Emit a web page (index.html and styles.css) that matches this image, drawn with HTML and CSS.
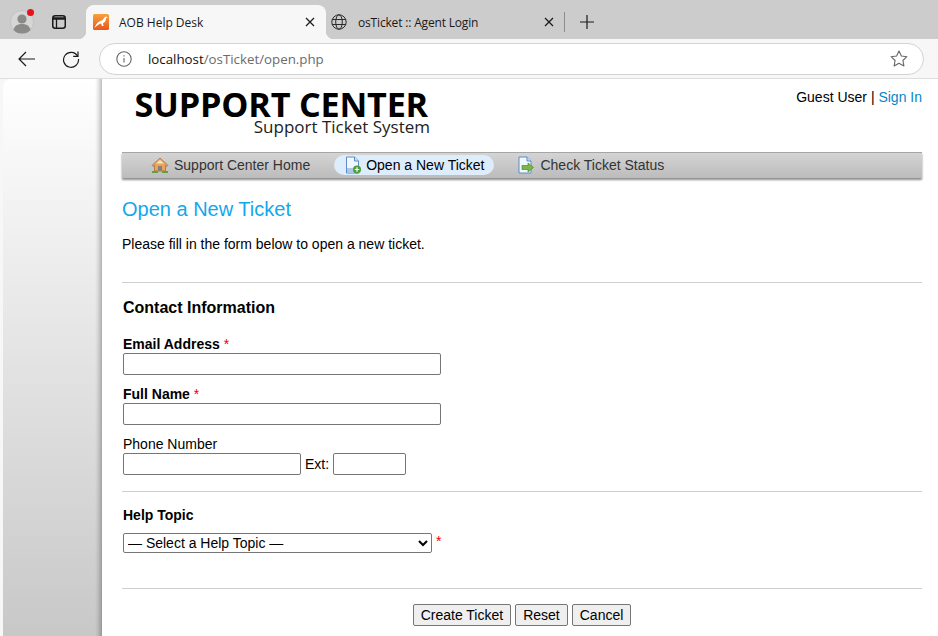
FILE: index.html
```html
<!DOCTYPE html>
<html lang="en">
<head>
    <meta charset="UTF-8">
    <title>AOB Help Desk</title>
    <link rel="stylesheet" href="styles.css">
</head>
<body>
    <div class="tabstrip">
        <div class="profile">
            <svg width="24" height="24" viewBox="0 0 24 24">
                <circle cx="12" cy="12" r="11.5" fill="#d6d6d6" stroke="#c2c2c2"/>
                <circle cx="12" cy="9" r="4.6" fill="#8a8a88"/>
                <path d="M3.5 20c1-4.500 4.500-6 8.500-6s7.500 1.500 8.500 6c-2 2.500-5 3.500-8.500 3.500S5.500 22.500 3.500 20z" fill="#8a8a88"/>
            </svg>
            <span class="profile-dot"></span>
        </div>
        <svg class="tabs-btn" width="14" height="14" viewBox="0 0 14 14">
            <rect x="0.75" y="0.75" width="12.500" height="12.500" rx="2.500" fill="none" stroke="#1a1a1a" stroke-width="1.500"/>
            <path d="M1 3.500h12" stroke="#1a1a1a" stroke-width="2.500"/>
            <path d="M4.500 3.500v9.500" stroke="#1a1a1a" stroke-width="1.300"/>
        </svg>
        <div class="tab tab-active">
            <svg class="favicon" width="16" height="16" viewBox="0 0 16 16">
                <defs>
                    <linearGradient id="fav" x1="0" y1="0" x2="0" y2="1">
                        <stop offset="0" stop-color="#f8a13c"/>
                        <stop offset="1" stop-color="#e8571c"/>
                    </linearGradient>
                </defs>
                <rect width="16" height="16" rx="1.500" fill="url(#fav)"/>
                <path d="M1.500 14c.8-2.500 2-4.500 4-6 1.500-1.200 3.500-1.200 4.500-2.500.8-1 1.500-2.500 3-3l1.500.8-1.500 1.200c0 2.200-1.200 4-3 4.800l.5 2.700H9L8 9.500C6 9.800 4 11.500 1.500 14z" fill="#fff"/>
            </svg>
            <span class="tab-title">AOB Help Desk</span>
            <svg class="tab-close" width="10" height="10" viewBox="0 0 10 10"><path d="M1 1l8 8M9 1l-8 8" stroke="#1a1a1a" stroke-width="1.200"/></svg>
        </div>
        <div class="tab">
            <svg class="favicon" width="16" height="16" viewBox="0 0 16 16" fill="none" stroke="#2b2b2b" stroke-width="1">
                <circle cx="8" cy="8" r="7.200"/>
                <ellipse cx="8" cy="8" rx="3.300" ry="7.200"/>
                <path d="M1.200 5.500h13.600M1.200 10.500h13.600"/>
            </svg>
            <span class="tab-title">osTicket :: Agent Login</span>
            <svg class="tab-close" width="10" height="10" viewBox="0 0 10 10"><path d="M1 1l8 8M9 1l-8 8" stroke="#1a1a1a" stroke-width="1.200"/></svg>
        </div>
        <span class="tab-sep"></span>
        <svg class="new-tab" width="14" height="14" viewBox="0 0 14 14"><path d="M7 0v14M0 7h14" stroke="#1a1a1a" stroke-width="1.200"/></svg>
    </div>

    <div class="toolbar">
        <svg class="nav-icon" width="18" height="16" viewBox="0 0 18 16" fill="none" stroke="#1a1a1a" stroke-width="1.200"><path d="M17 8H1M8 1L1 8l7 7"/></svg>
        <svg class="nav-icon reload" width="18" height="18" viewBox="0 0 18 18" fill="none" stroke="#1a1a1a" stroke-width="1.200"><path d="M15.500 6A7.500 7.500 0 1 0 16.500 9"/><path d="M16 1.500V6.300H11.200"/></svg>
        <div class="address">
            <svg width="16" height="16" viewBox="0 0 16 16" fill="none" stroke="#666" stroke-width="1.100">
                <circle cx="8" cy="8" r="7.200"/>
                <path d="M8 7v4.500M8 4.300v1.300"/>
            </svg>
            <span class="url"><b>localhost</b>/osTicket/open.php</span>
            <svg class="star" width="18" height="17" viewBox="0 0 18 17" fill="none" stroke="#666" stroke-width="1.100" stroke-linejoin="round"><path d="M9 1l2.400 5 5.500.7-4 3.800 1 5.400L9 13.300 4.100 15.900l1-5.400-4-3.800L6.600 6z"/></svg>
        </div>
    </div>

    <div class="viewport">
        <div class="side-panel"></div>
        <div class="page">
            <div class="page-header">
                <div class="logo">
                    <div class="logo-main">SUPPORT CENTER</div>
                    <div class="logo-sub">Support Ticket System</div>
                </div>
                <div class="user-links">Guest User | <a href="#">Sign In</a></div>
            </div>

            <nav class="main-nav">
                <a href="#" class="nav-item nav-home">
                    <svg width="18" height="16" viewBox="0 0 18 16">
                        <path d="M9 1L1 8.500l1 1L3.500 8.300V14h11V8.300L16 9.500l1-1z" fill="#e8a45c" stroke="#a9743a" stroke-width="0.800"/>
                        <rect x="7" y="9" width="4" height="5" fill="#8a8078"/>
                        <path d="M5 6.500L9 3l4 3.500z" fill="#f6e4c8"/>
                        <path d="M1 15h6M11 15h6" stroke="#5ba33a" stroke-width="2"/>
                    </svg>
                    Support Center Home
                </a>
                <a href="#" class="nav-item nav-active">
                    <svg width="18" height="18" viewBox="0 0 18 18">
                        <path d="M2.500 1h8l4 4v12h-12z" fill="#f2f7fd" stroke="#5b8cc6"/>
                        <path d="M10.500 1v4h4" fill="#cfe0f3" stroke="#5b8cc6"/>
                        <path d="M3 12h11v4.500H3z" fill="#a9c8ea"/>
                        <circle cx="13" cy="13.500" r="4" fill="#4f9e3c"/>
                        <path d="M13 11.300v4.400M10.800 13.500h4.400" stroke="#fff" stroke-width="1.200"/>
                    </svg>
                    Open a New Ticket
                </a>
                <a href="#" class="nav-item nav-status">
                    <svg width="18" height="18" viewBox="0 0 18 18">
                        <path d="M2 1h8l4 4v12H2z" fill="#f2f7fd" stroke="#5b8cc6"/>
                        <path d="M10 1v4h4" fill="#cfe0f3" stroke="#5b8cc6"/>
                        <path d="M5 9.500h6V7l5.500 4.500L11 16v-2.500H5z" fill="#7ab648" stroke="#4f8a2c" stroke-width="0.700"/>
                    </svg>
                    Check Ticket Status
                </a>
            </nav>

            <h1 class="page-title">Open a New Ticket</h1>
            <p class="intro">Please fill in the form below to open a new ticket.</p>
            <hr class="rule">

            <form class="ticket-form">
                <h2 class="section-title">Contact Information</h2>

                <div class="field">
                    <label class="label-req">Email Address <span class="req">*</span></label>
                    <input type="text" class="input-wide">
                </div>
                <div class="field">
                    <label class="label-req">Full Name <span class="req">*</span></label>
                    <input type="text" class="input-wide">
                </div>
                <div class="field">
                    <label>Phone Number</label>
                    <div class="phone-row">
                        <input type="text" class="input-phone">
                        <span>Ext:</span>
                        <input type="text" class="input-ext">
                    </div>
                </div>

                <hr class="rule rule-mid">

                <div class="topic">
                    <label class="label-req">Help Topic</label>
                    <div class="topic-row">
                        <select class="topic-select">
                            <option>— Select a Help Topic —</option>
                        </select>
                        <span class="req">*</span>
                    </div>
                </div>

                <hr class="rule rule-end">

                <div class="buttons">
                    <button type="button">Create Ticket</button>
                    <button type="button">Reset</button>
                    <button type="button">Cancel</button>
                </div>
            </form>
        </div>
    </div>
</body>
</html>
```

FILE: styles.css
```css
* {
    box-sizing: border-box;
}

html, body {
    height: 100%;
}

body {
    margin: 0;
    overflow: hidden;
    font-family: "Liberation Sans", Arial, sans-serif;
    font-size: 14px;
    color: #000;
    background: #fff;
}

/* browser chrome */
.tabstrip {
    height: 39px;
    background: #cccccc;
    display: flex;
    align-items: flex-end;
    position: relative;
}

.profile {
    width: 24px;
    height: 24px;
    margin: 0 0 5px 10px;
    position: relative;
}

.profile svg {
    display: block;
}

.profile-dot {
    position: absolute;
    top: -1px;
    right: 0;
    width: 7px;
    height: 7px;
    border-radius: 50%;
    background: #e8101c;
}

.tabs-btn {
    margin: 0 0 10px 18px;
}

.tab {
    height: 34px;
    width: 242px;
    display: flex;
    align-items: center;
    padding: 0 0 0 7px;
    font-family: "Open Sans", "Noto Sans", sans-serif;
    font-size: 12px;
    color: #1a1a1a;
}

.tab-active {
    width: 240px;
    margin-left: 20px;
    background: #f7f7f7;
    border-radius: 8px 8px 0 0;
    position: relative;
}

/* flared corners at the foot of the active tab */
.tab-active::before,
.tab-active::after {
    content: "";
    position: absolute;
    bottom: 0;
    width: 8px;
    height: 8px;
}

.tab-active::before {
    left: -8px;
    background: radial-gradient(circle at 0 0, transparent 8px, #f7f7f7 8.500px);
}

.tab-active::after {
    right: -8px;
    background: radial-gradient(circle at 100% 0, transparent 8px, #f7f7f7 8.500px);
}

.tab-title {
    margin-left: 10px;
    flex: 1;
    white-space: nowrap;
}

.tab-close {
    margin-right: 6px;
}

.tab-active .tab-close {
    margin-right: 11px;
}

.tab + .tab {
    width: 238px;
    padding-left: 5px;
}

.tab + .tab .tab-title {
    margin-left: 11px;
    letter-spacing: -0.17px;
}

.tab + .tab .tab-close {
    margin-right: 10px;
}

.tab-sep {
    width: 1px;
    height: 20px;
    background: #8c8c8c;
    margin-bottom: 7px;
}

.new-tab {
    margin: 0 0 10px 15px;
}

.toolbar {
    height: 40px;
    background: #f7f7f7;
    border-bottom: 1px solid #dedede;
    display: flex;
    align-items: center;
    padding-left: 18px;
}

.nav-icon {
    flex-shrink: 0;
}

.reload {
    margin-left: 26px;
}

.address {
    margin-left: 19px;
    width: 825px;
    height: 32px;
    background: #fff;
    border: 1px solid #d3d3d3;
    border-radius: 16px;
    display: flex;
    align-items: center;
    padding: 0 15px 0 16px;
}

.url {
    margin-left: 16px;
    flex: 1;
    font-family: "Open Sans", "Noto Sans", sans-serif;
    font-size: 13.300px;
    color: #6b6b6b;
}

.url b {
    font-weight: 400;
    color: #111;
}

/* page area */
.viewport {
    display: flex;
    height: 557px;
    background: #f7f7f7;
}

.side-panel {
    width: 99px;
    margin-left: 3px;
    border-radius: 8px 0 0 0;
    background:
        linear-gradient(to right, transparent 93%, rgba(0, 0, 0, 0.08) 96%, rgba(0, 0, 0, 0.25) 100%),
        linear-gradient(to bottom, #ffffff, #c8c8c8);
}

.page {
    flex: 1;
    background: #fff;
    padding: 0 16px 0 20px;
}

.page-header {
    display: flex;
    justify-content: space-between;
    height: 73px;
}

.logo {
    margin-left: 12px;
    width: 296px;
    padding-top: 10px;
    text-align: right;
    font-family: "Open Sans", "Noto Sans", sans-serif;
}

.logo-main {
    font-size: 34.200px;
    font-weight: 700;
    line-height: 30px;
    white-space: nowrap;
    padding-right: 2px;
    letter-spacing: -0.2px;
}

.logo-sub {
    font-size: 17px;
    line-height: 14px;
    margin-top: 1px;
    color: #222;
}

.user-links {
    padding-top: 10px;
}

.user-links a {
    color: #0a84c9;
    text-decoration: none;
}

.main-nav {
    height: 26px;
    padding-bottom: 2px;
    background: linear-gradient(to bottom, #d4d4d4, #bcbcbc);
    border-top: 1px solid #a6a6a6;
    box-shadow: 0 2px 2px #8e8e8e;
    display: flex;
    align-items: center;
}

.nav-item {
    display: flex;
    align-items: center;
    gap: 5px;
    height: 20px;
    color: #333;
    text-decoration: none;
    white-space: nowrap;
}

.nav-home {
    margin-left: 29px;
}

.nav-active {
    margin-left: 24px;
    padding: 0 10px;
    gap: 4px;
    background: #deedfb;
    border-radius: 10px;
    color: #000;
}

.nav-status {
    margin-left: 23px;
}

.page-title {
    margin: 18px 0 0;
    font-size: 20px;
    font-weight: 400;
    line-height: 26px;
    color: #12a8ec;
}

.intro {
    margin: 14px 0 0;
    line-height: 16px;
}

.rule {
    border: 0;
    border-top: 1px solid #cfcfcf;
    margin: 0;
    height: 1px;
}

.page > .rule {
    margin-top: 30px;
}

.ticket-form {
    padding-top: 15px;
}

.section-title {
    margin: 0 0 0 1px;
    font-size: 16px;
    line-height: 20px;
}

.field {
    margin: 0 0 11px 1px;
    display: flex;
    flex-direction: column;
    align-items: flex-start;
}

.section-title + .field {
    margin-top: 18px;
}

.field label {
    line-height: 16px;
    margin-bottom: 1px;
}

.label-req {
    font-weight: 700;
}

.req {
    color: #e00;
    font-weight: 400;
}

input {
    height: 22px;
    border: 1px solid #767676;
    border-radius: 2px;
    background: #fff;
    padding: 1px 2px;
    margin: 0;
}

.input-wide {
    width: 318px;
}

.phone-row {
    display: flex;
    align-items: center;
    gap: 4px;
}

.input-phone {
    width: 178px;
}

.input-ext {
    width: 73px;
}

.rule-mid {
    margin-top: 16px;
}

.topic {
    margin: 15px 0 0 1px;
}

.topic label {
    display: block;
    line-height: 16px;
}

.topic-row {
    margin-top: 10px;
    display: flex;
    gap: 4px;
}

.topic-select {
    width: 309px;
    height: 20px;
    font-family: "Liberation Sans", Arial, sans-serif;
    font-size: 14px;
    color: #000;
    background: #fff;
    border: 1px solid #767676;
    border-radius: 2px;
    padding: 0;
}

.rule-end {
    margin-top: 35px;
}

.buttons {
    margin-top: 15px;
    display: flex;
    justify-content: center;
    gap: 4px;
}

.buttons button {
    height: 22px;
    padding: 0 7px;
    font-family: "Liberation Sans", Arial, sans-serif;
    font-size: 14px;
    color: #000;
    background: #efefef;
    border: 1px solid #767676;
    border-radius: 2px;
}
```
